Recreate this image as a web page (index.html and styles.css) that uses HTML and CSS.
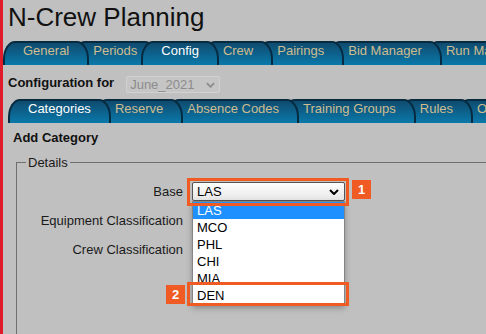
FILE: index.html
```html
<!DOCTYPE html>
<html lang="en">
<head>
  <meta charset="UTF-8">
  <title>N-Crew Planning - Add Category</title>
  <link rel="stylesheet" href="styles.css">
</head>
<body>

  <h1 class="title">N-Crew Planning</h1>

  <ul class="tabs">
    <li>General</li>
    <li>Periods</li>
    <li class="active">Config</li>
    <li>Crew</li>
    <li>Pairings</li>
    <li>Bid Manager</li>
    <li>Run Manager</li>
  </ul>

  <div class="config-row">
    <label for="period">Configuration for</label>
    <span class="select-wrap">
      <select id="period" class="period-select" disabled>
        <option>June_2021</option>
      </select>
      <svg class="chevron chevron-disabled" width="9" height="6" viewBox="0 0 10 6"><path d="M1 1l4 4 4-4" fill="none" stroke="currentColor" stroke-width="2"/></svg>
    </span>
  </div>

  <ul class="tabs sub-tabs">
    <li class="active">Categories</li>
    <li>Reserve</li>
    <li>Absence Codes</li>
    <li>Training Groups</li>
    <li>Rules</li>
    <li>Other</li>
  </ul>

  <div class="content">
    <h3>Add Category</h3>

    <fieldset>
      <legend>Details</legend>

      <div class="form-grid">
        <label for="base">Base</label>
        <div class="select-wrap base-wrap">
          <select id="base" class="field-select">
            <option selected>LAS</option>
            <option>MCO</option>
            <option>PHL</option>
            <option>CHI</option>
            <option>MIA</option>
            <option>DEN</option>
          </select>
          <svg class="chevron" width="10" height="6" viewBox="0 0 10 6"><path d="M1 1l4 4 4-4" fill="none" stroke="currentColor" stroke-width="2"/></svg>

          <!-- open list of the Base select -->
          <ul class="dropdown">
            <li class="selected">LAS</li>
            <li>MCO</li>
            <li>PHL</li>
            <li>CHI</li>
            <li>MIA</li>
            <li>DEN</li>
          </ul>

          <!-- annotations -->
          <span class="callout callout-base"></span>
          <span class="badge badge-1">1</span>
          <span class="callout callout-den"></span>
          <span class="badge badge-2">2</span>
        </div>

        <label for="equipment">Equipment Classification</label>
        <select id="equipment" class="field-select"></select>

        <label for="crewClass">Crew Classification</label>
        <select id="crewClass" class="field-select"></select>
      </div>
    </fieldset>
  </div>

</body>
</html>
```

FILE: styles.css
```css
html {
  overflow: hidden;
}
body {
  margin: 0;
  min-height: 100vh;
  border-left: 3px solid #e01b2b;
  background-color: #c0c0c0;
  font-family: "Liberation Sans", Arial, sans-serif;
  font-size: 13px;
  color: #1a1a1a;
  overflow: hidden;
}
.title {
  margin: 0;
  padding: 2px 0 9px 5px;
  font-size: 26px;
  font-weight: normal;
  line-height: 30px;
  color: #111;
}

/* tab strips */
.tabs {
  display: flex;
  margin: 0;
  padding: 0;
  list-style: none;
  height: 24px;
  overflow: hidden;
}
.tabs li {
  flex: none;
  position: relative;
  box-sizing: border-box;
  height: 24px;
  margin-left: -16px;
  padding: 0 18px;
  border: 2px solid #062b41;
  border-bottom: none;
  border-radius: 12px 12px 0 0 / 18px 18px 0 0;
  background: linear-gradient(#0f4b6f, #0a79aa);
  color: #cdbd90;
  line-height: 15px;
  white-space: nowrap;
}
.tabs li:first-child { margin-left: 0; }
.tabs li:nth-child(1) { z-index: 7; }
.tabs li:nth-child(2) { z-index: 6; }
.tabs li:nth-child(3) { z-index: 5; }
.tabs li:nth-child(4) { z-index: 4; }
.tabs li:nth-child(5) { z-index: 3; }
.tabs li:nth-child(6) { z-index: 2; }
.tabs li:nth-child(7) { z-index: 1; }
.tabs li.active {
  z-index: 10;
  color: #fff;
}
.sub-tabs {
  margin-left: 5px;
}

/* period selector */
.config-row {
  display: flex;
  align-items: center;
  gap: 12px;
  height: 34px;
  padding-left: 5px;
}
.config-row label {
  font-weight: bold;
  color: #111;
}
.config-row .select-wrap {
  margin-top: 5px;
}

.select-wrap {
  position: relative;
  display: inline-block;
}
select {
  -webkit-appearance: none;
  appearance: none;
  margin: 0;
  box-sizing: border-box;
  font: inherit;
  color: #000;
}
.period-select {
  width: 94px;
  height: 17px;
  padding: 0 0 0 3px;
  border: 1px solid #d2d2d2;
  border-radius: 2px;
  background: #c5c5c5;
}
.period-select:disabled {
  color: #8c8c8c;
  opacity: 1;
}
.chevron {
  position: absolute;
  right: 6px;
  top: 7px;
  color: #000;
  pointer-events: none;
}
.chevron-disabled {
  right: 5px;
  top: 6px;
  color: #8c8c8c;
}

/* add category form */
.content {
  padding: 7px 0 0 10px;
}
h3 {
  margin: 0 0 10px;
  font-size: 13px;
  line-height: 15px;
  color: #111;
}
fieldset {
  width: 600px;
  min-height: 300px;
  margin: 0 0 0 3px;
  padding: 7px 0 0;
  border: 1px solid #6f6f6f;
}
legend {
  margin-left: 9px;
  padding: 0 2px;
  line-height: 15px;
}
.form-grid {
  display: grid;
  grid-template-columns: 166px 153px;
  grid-auto-rows: 29px;
  column-gap: 9px;
  align-items: center;
}
.form-grid label {
  text-align: right;
}
.field-select {
  width: 153px;
  height: 19px;
  padding: 0 0 0 4px;
  border: 1px solid #555;
  border-radius: 2px;
  background: linear-gradient(#fff, #e6e6e6);
}
.base-wrap {
  z-index: 2;
  height: 19px;
}

.dropdown {
  position: absolute;
  top: 19px;
  left: 0;
  width: 153px;
  box-sizing: border-box;
  margin: 0;
  padding: 0;
  list-style: none;
  border: 1px solid #858585;
  background: #fff;
  box-shadow: 0 3px 6px rgba(0,0,0,0.3);
  color: #000;
}
.dropdown li {
  height: 17px;
  padding-left: 4px;
  line-height: 17px;
}
.dropdown li.selected {
  background-color: #1e90ff;
  color: #fff;
}

/* orange annotations */
.callout {
  position: absolute;
  left: -5px;
  width: 162px;
  box-sizing: border-box;
  border: 3px solid #f05a23;
}
.callout-base {
  top: -4px;
  height: 28px;
}
.callout-den {
  top: 100px;
  height: 24px;
}
.badge {
  position: absolute;
  width: 19px;
  height: 19px;
  background-color: #f05a23;
  color: #fff;
  font-weight: bold;
  line-height: 19px;
  text-align: center;
}
.badge-1 {
  left: 160px;
  top: -2px;
}
.badge-2 {
  left: -26px;
  top: 103px;
}
```
